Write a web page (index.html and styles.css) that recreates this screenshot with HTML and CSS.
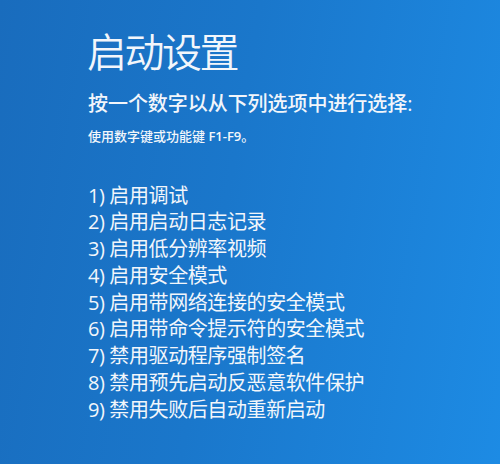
FILE: index.html
```html
<!DOCTYPE html>
<html lang="zh-CN">
<head>
<meta charset="utf-8">
<title>启动设置</title>
<link rel="stylesheet" href="styles.css">
</head>
<body>
<main class="screen">
  <h1 class="title">启动设置</h1>
  <p class="prompt">按一个数字以从下列选项中进行选择:</p>
  <p class="hint">使用数字键或功能键 <span class="keys">F1-F9</span>。</p>
  <ul class="options">
    <li>1) 启用调试</li>
    <li>2) 启用启动日志记录</li>
    <li>3) 启用低分辨率视频</li>
    <li>4) 启用安全模式</li>
    <li>5) 启用带网络连接的安全模式</li>
    <li>6) 启用带命令提示符的安全模式</li>
    <li>7) 禁用驱动程序强制签名</li>
    <li>8) 禁用预先启动反恶意软件保护</li>
    <li>9) 禁用失败后自动重新启动</li>
  </ul>
</main>
</body>
</html>
```
FILE: styles.css
```css
html, body {
  margin: 0;
  padding: 0;
  height: 100%;
}
body {
  background: linear-gradient(100deg, #196cbd 0%, #1a77cb 45%, #1d8be4 100%);
  color: #f2f6fb;
  font-family: "Open Sans", "Noto Sans CJK SC", sans-serif;
  overflow: hidden;
}
.screen {
  padding: 32px 0 0 88px;
  display: flex;
  flex-direction: column;
}
.title {
  margin: 0 0 0 -1px;
  font-size: 40px;
  line-height: 1;
  font-weight: 350;
  letter-spacing: -2.5px;
}
.prompt {
  margin: 22px 0 0;
  font-size: 20px;
  line-height: 1;
  font-weight: 500;
  letter-spacing: -0.05px;
}
.hint {
  margin: 16px 0 0;
  font-size: 13px;
  line-height: 1;
  font-weight: 500;
}
.keys {
  font-weight: 600;
}
.options {
  list-style: none;
  margin: 39.5px 0 0;
  padding: 0;
  font-size: 20px;
  line-height: 26.8px;
  letter-spacing: -0.4px;
}
```
